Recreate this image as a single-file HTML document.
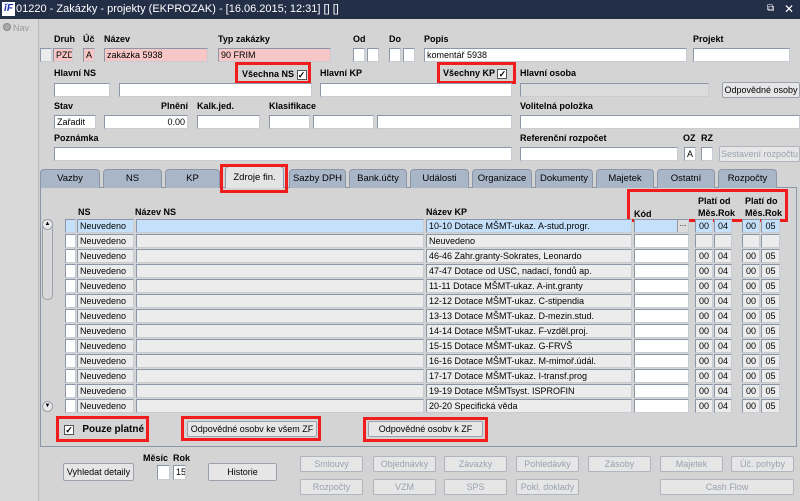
<!DOCTYPE html><html><head><meta charset="utf-8"><style>
*{box-sizing:border-box;margin:0;padding:0}
body{width:800px;height:501px;overflow:hidden;background:#d4d4d4;font-family:"Liberation Sans",sans-serif;font-size:9px;color:#000;position:relative}
.a{position:absolute}
.t{position:absolute;height:19px;background:#222f47;left:0;top:0;width:800px;color:#fff;font-size:11px;line-height:18px}
.l{position:absolute;font-weight:bold;font-size:9px;white-space:nowrap}
.i{position:absolute;height:14px;background:#fff;border:1px solid #8b97a8;border-right-color:#c8ccd4;border-bottom-color:#c8ccd4;font-size:9px;line-height:12px;padding-left:2px;white-space:nowrap;overflow:hidden}
.pk{background:#f7c6c6}
.g{background:#ececec}
.sel{background:#c4e0fa}
.b{position:absolute;height:16px;background:#e6e6e6;border:1px solid #9aa2ad;border-radius:2px;text-align:center;font-size:9px;line-height:14px;white-space:nowrap}
.d{color:#9aa2ad;border-color:#b0b6bf}
.r{position:absolute;border:3px solid #f21c1c}
.tab{position:absolute;top:169px;height:19px;background:#a9b6c8;border:1px solid #8b97a8;border-bottom:none;border-radius:4px 4px 0 0;text-align:center;font-size:9.5px;line-height:18px}
.cb{display:inline-block;width:10px;height:10px;border:1px solid #555;background:#fff;vertical-align:-1px;font-size:9px;line-height:8px;text-align:center;font-weight:bold}
.i.c{text-align:center;padding:0}
</style></head><body>
<div class="t"><span style="position:absolute;left:2px;top:2px;width:13px;height:14px;background:#fff;color:#1a2fb8;font-weight:bold;font-style:italic;font-size:10px;line-height:14px;text-align:center">ĭF</span><span style="position:absolute;left:16px">01220 - Zakázky - projekty (EKPROZAK) - [16.06.2015; 12:31] [] []</span><span style="position:absolute;left:767px;font-size:10px">⧉</span><span style="position:absolute;left:784px;font-size:12px">✕</span></div>
<div class="a" style="left:0;top:19px;width:39px;height:482px;background:#d8d8d8;border-right:1px solid #b8b8b8"></div>
<div class="a" style="left:3px;top:23px;width:8px;height:8px;border-radius:50%;background:#aaa;border:1px solid #888"></div>
<div class="l" style="left:13px;top:23px;color:#999;font-weight:normal">Nav</div>

<div class="l" style="left:54px;top:34px">Druh</div><div class="l" style="left:83px;top:34px">Úč</div><div class="l" style="left:104px;top:34px">Název</div><div class="l" style="left:218px;top:34px">Typ zakázky</div><div class="l" style="left:353px;top:34px">Od</div><div class="l" style="left:389px;top:34px">Do</div><div class="l" style="left:424px;top:34px">Popis</div><div class="l" style="left:693px;top:34px">Projekt</div>
<div class="i g" style="left:40px;top:48px;width:12px"></div><div class="i pk" style="left:53px;top:48px;width:20px">PZD</div><div class="i pk" style="left:83px;top:48px;width:12px">A</div><div class="i pk" style="left:104px;top:48px;width:104px">zakázka 5938</div><div class="i pk" style="left:218px;top:48px;width:113px">90 FRIM</div>
<div class="i" style="left:353px;top:48px;width:12px"></div><div class="i" style="left:367px;top:48px;width:12px"></div><div class="i" style="left:389px;top:48px;width:12px"></div><div class="i" style="left:403px;top:48px;width:12px"></div>
<div class="i" style="left:424px;top:48px;width:263px">komentář 5938</div><div class="i" style="left:693px;top:48px;width:97px"></div>

<div class="l" style="left:54px;top:68px">Hlavní NS</div><div class="l" style="left:242px;top:69px">Všechna NS <span class="cb">✓</span></div><div class="r" style="left:235px;top:62px;width:76px;height:22px"></div>
<div class="l" style="left:320px;top:68px">Hlavní KP</div><div class="l" style="left:443px;top:68px">Všechny KP <span class="cb">✓</span></div><div class="r" style="left:437px;top:62px;width:79px;height:22px"></div><div class="l" style="left:520px;top:68px">Hlavní osoba</div>
<div class="i" style="left:54px;top:83px;width:56px"></div><div class="i" style="left:119px;top:83px;width:193px"></div><div class="i" style="left:320px;top:83px;width:192px"></div><div class="i g" style="left:520px;top:83px;width:189px;background:#dcdcdc"></div><div class="b" style="left:722px;top:82px;width:78px">Odpovědné osoby</div>

<div class="l" style="left:54px;top:101px">Stav</div><div class="l" style="left:161px;top:101px">Plnění</div><div class="l" style="left:197px;top:101px">Kalk.jed.</div><div class="l" style="left:269px;top:101px">Klasifikace</div><div class="l" style="left:520px;top:101px">Volitelná položka</div>
<div class="i" style="left:54px;top:115px;width:42px">Zařadit</div><div class="i" style="left:104px;top:115px;width:84px;text-align:right;padding-right:2px">0.00</div><div class="i" style="left:197px;top:115px;width:63px"></div><div class="i" style="left:269px;top:115px;width:41px"></div><div class="i" style="left:313px;top:115px;width:61px"></div><div class="i" style="left:377px;top:115px;width:135px"></div><div class="i" style="left:520px;top:115px;width:280px"></div>

<div class="l" style="left:54px;top:133px">Poznámka</div><div class="l" style="left:520px;top:133px">Referenční rozpočet</div><div class="l" style="left:683px;top:133px">OZ</div><div class="l" style="left:701px;top:133px">RZ</div>
<div class="i" style="left:54px;top:147px;width:458px"></div><div class="i" style="left:520px;top:147px;width:158px"></div><div class="i" style="left:684px;top:147px;width:12px">A</div><div class="i" style="left:701px;top:147px;width:12px"></div><div class="b d" style="left:719px;top:146px;width:81px">Sestavení rozpočtu</div>

<div class="a" style="left:40px;top:187px;width:757px;height:260px;border:1px solid #8b97a8;background:#d4d4d4"></div>
<div class="tab" style="left:40px;width:60px">Vazby</div><div class="tab" style="left:103px;width:59px">NS</div><div class="tab" style="left:165px;width:55px">KP</div><div class="tab" style="left:225px;width:59px;background:#e4e4e4;top:166px;height:22px;line-height:22px">Zdroje fin.</div><div class="tab" style="left:289px;width:57px">Sazby DPH</div><div class="tab" style="left:349px;width:58px">Bank.účty</div><div class="tab" style="left:410px;width:59px">Události</div><div class="tab" style="left:472px;width:60px">Organizace</div><div class="tab" style="left:535px;width:58px">Dokumenty</div><div class="tab" style="left:596px;width:58px">Majetek</div><div class="tab" style="left:657px;width:58px">Ostatní</div><div class="tab" style="left:718px;width:59px">Rozpočty</div>
<div class="r" style="left:220px;top:164px;width:68px;height:29px"></div>

<div class="l" style="left:78px;top:207px">NS</div><div class="l" style="left:135px;top:207px">Název NS</div><div class="l" style="left:426px;top:207px">Název KP</div><div class="l" style="left:634px;top:209px">Kód</div><div class="l" style="left:698px;top:195px;line-height:12px">Platí od<br>Měs.Rok</div><div class="l" style="left:745px;top:195px;line-height:12px">Platí do<br>Měs.Rok</div>
<div class="r" style="left:627px;top:189px;width:161px;height:33px"></div>

<div class="a" style="left:42px;top:219px;width:11px;height:81px;border:1px solid #9aa2ad;border-radius:5px;background:#d8d8d8"></div>
<div class="a" style="left:42px;top:219px;width:11px;height:11px;border:1px solid #9aa2ad;border-radius:50%;background:#e8e8e8;font-size:6px;text-align:center;line-height:9px">▲</div>
<div class="a" style="left:42px;top:401px;width:11px;height:11px;border:1px solid #9aa2ad;border-radius:50%;background:#e8e8e8;font-size:6px;text-align:center;line-height:9px">▼</div>

<div id="rows"></div>
<script>
var d=[["10-10 Dotace MŠMT-ukaz.  A-stud.progr.",1],["Neuvedeno",0],["46-46 Zahr.granty-Sokrates, Leonardo",1],["47-47 Dotace od USC, nadací, fondů ap.",1],["11-11 Dotace MŠMT-ukaz.  A-int.granty",1],["12-12 Dotace MŠMT-ukaz.  C-stipendia",1],["13-13 Dotace MŠMT-ukaz.  D-mezin.stud.",1],["14-14 Dotace MŠMT-ukaz.  F-vzděl.proj.",1],["15-15 Dotace MŠMT-ukaz.  G-FRVŠ",1],["16-16 Dotace MŠMT-ukaz.  M-mimoř.údál.",1],["17-17 Dotace MŠMT-ukaz.  I-transf.prog",1],["19-19 Dotace MŠMTsyst. ISPROFIN",1],["20-20 Specifická věda",1]];
var h="";d.forEach(function(r,k){var y=219+k*15,g=k==0?" sel":" g";
h+='<div class="i'+(k==0?' sel':'')+'" style="left:65px;top:'+y+'px;width:11px"></div>';
h+='<div class="i'+g+'" style="left:77px;top:'+y+'px;width:57px">Neuvedeno</div>';
h+='<div class="i'+g+'" style="left:136px;top:'+y+'px;width:288px"></div>';
h+='<div class="i'+g+'" style="left:426px;top:'+y+'px;width:206px">'+r[0]+'</div>';
h+='<div class="i'+(k==0?' sel':'')+'" style="left:634px;top:'+y+'px;width:55px"></div>';
if(k==0)h+='<div class="a" style="left:677px;top:'+(y+1)+'px;width:11px;height:12px;background:#ddd;border-left:1px solid #999;font-size:8px;line-height:7px;text-align:center">...</div>';
var v=r[1]?["00","04","00","05"]:["","","",""],xs=[695,714,742,761],ws=[18,18,18,19];
for(var j=0;j<4;j++)h+='<div class="i c'+g+'" style="left:'+xs[j]+'px;top:'+y+'px;width:'+ws[j]+'px">'+v[j]+'</div>';});
document.getElementById("rows").innerHTML=h;
</script>

<div class="l" style="left:64px;top:424px;font-size:10px"><span class="cb">✓</span>&nbsp;&nbsp; Pouze platné</div><div class="r" style="left:56px;top:416px;width:93px;height:26px"></div>
<div class="b" style="left:187px;top:421px;width:130px">Odpovědné osobv ke všem ZF</div><div class="r" style="left:181px;top:416px;width:140px;height:25px"></div>
<div class="b" style="left:368px;top:421px;width:115px">Odpovědné osobv k ZF</div><div class="r" style="left:363px;top:417px;width:125px;height:25px"></div>

<div class="l" style="left:143px;top:453px">Měsíc</div><div class="l" style="left:173px;top:453px">Rok</div>
<div class="b" style="left:63px;top:463px;width:71px;height:18px;line-height:16px">Vyhledat detaily</div>
<div class="i" style="left:157px;top:465px;width:13px;height:15px"></div><div class="i" style="left:173px;top:465px;width:13px;height:15px">15</div>
<div class="b" style="left:208px;top:463px;width:69px;height:18px;line-height:16px">Historie</div>
<div class="b d" style="left:300px;top:456px;width:63px">Smlouvy</div><div class="b d" style="left:373px;top:456px;width:63px">Objednávky</div><div class="b d" style="left:444px;top:456px;width:63px">Závazky</div><div class="b d" style="left:516px;top:456px;width:63px">Pohledávky</div><div class="b d" style="left:588px;top:456px;width:63px">Zásoby</div><div class="b d" style="left:660px;top:456px;width:63px">Majetek</div><div class="b d" style="left:731px;top:456px;width:63px">Úč. pohyby</div>
<div class="b d" style="left:300px;top:479px;width:63px">Rozpočty</div><div class="b d" style="left:373px;top:479px;width:63px">VZM</div><div class="b d" style="left:444px;top:479px;width:63px">SPS</div><div class="b d" style="left:516px;top:479px;width:63px">Pokl. doklady</div><div class="b d" style="left:660px;top:479px;width:134px">Cash Flow</div>
</body></html>
